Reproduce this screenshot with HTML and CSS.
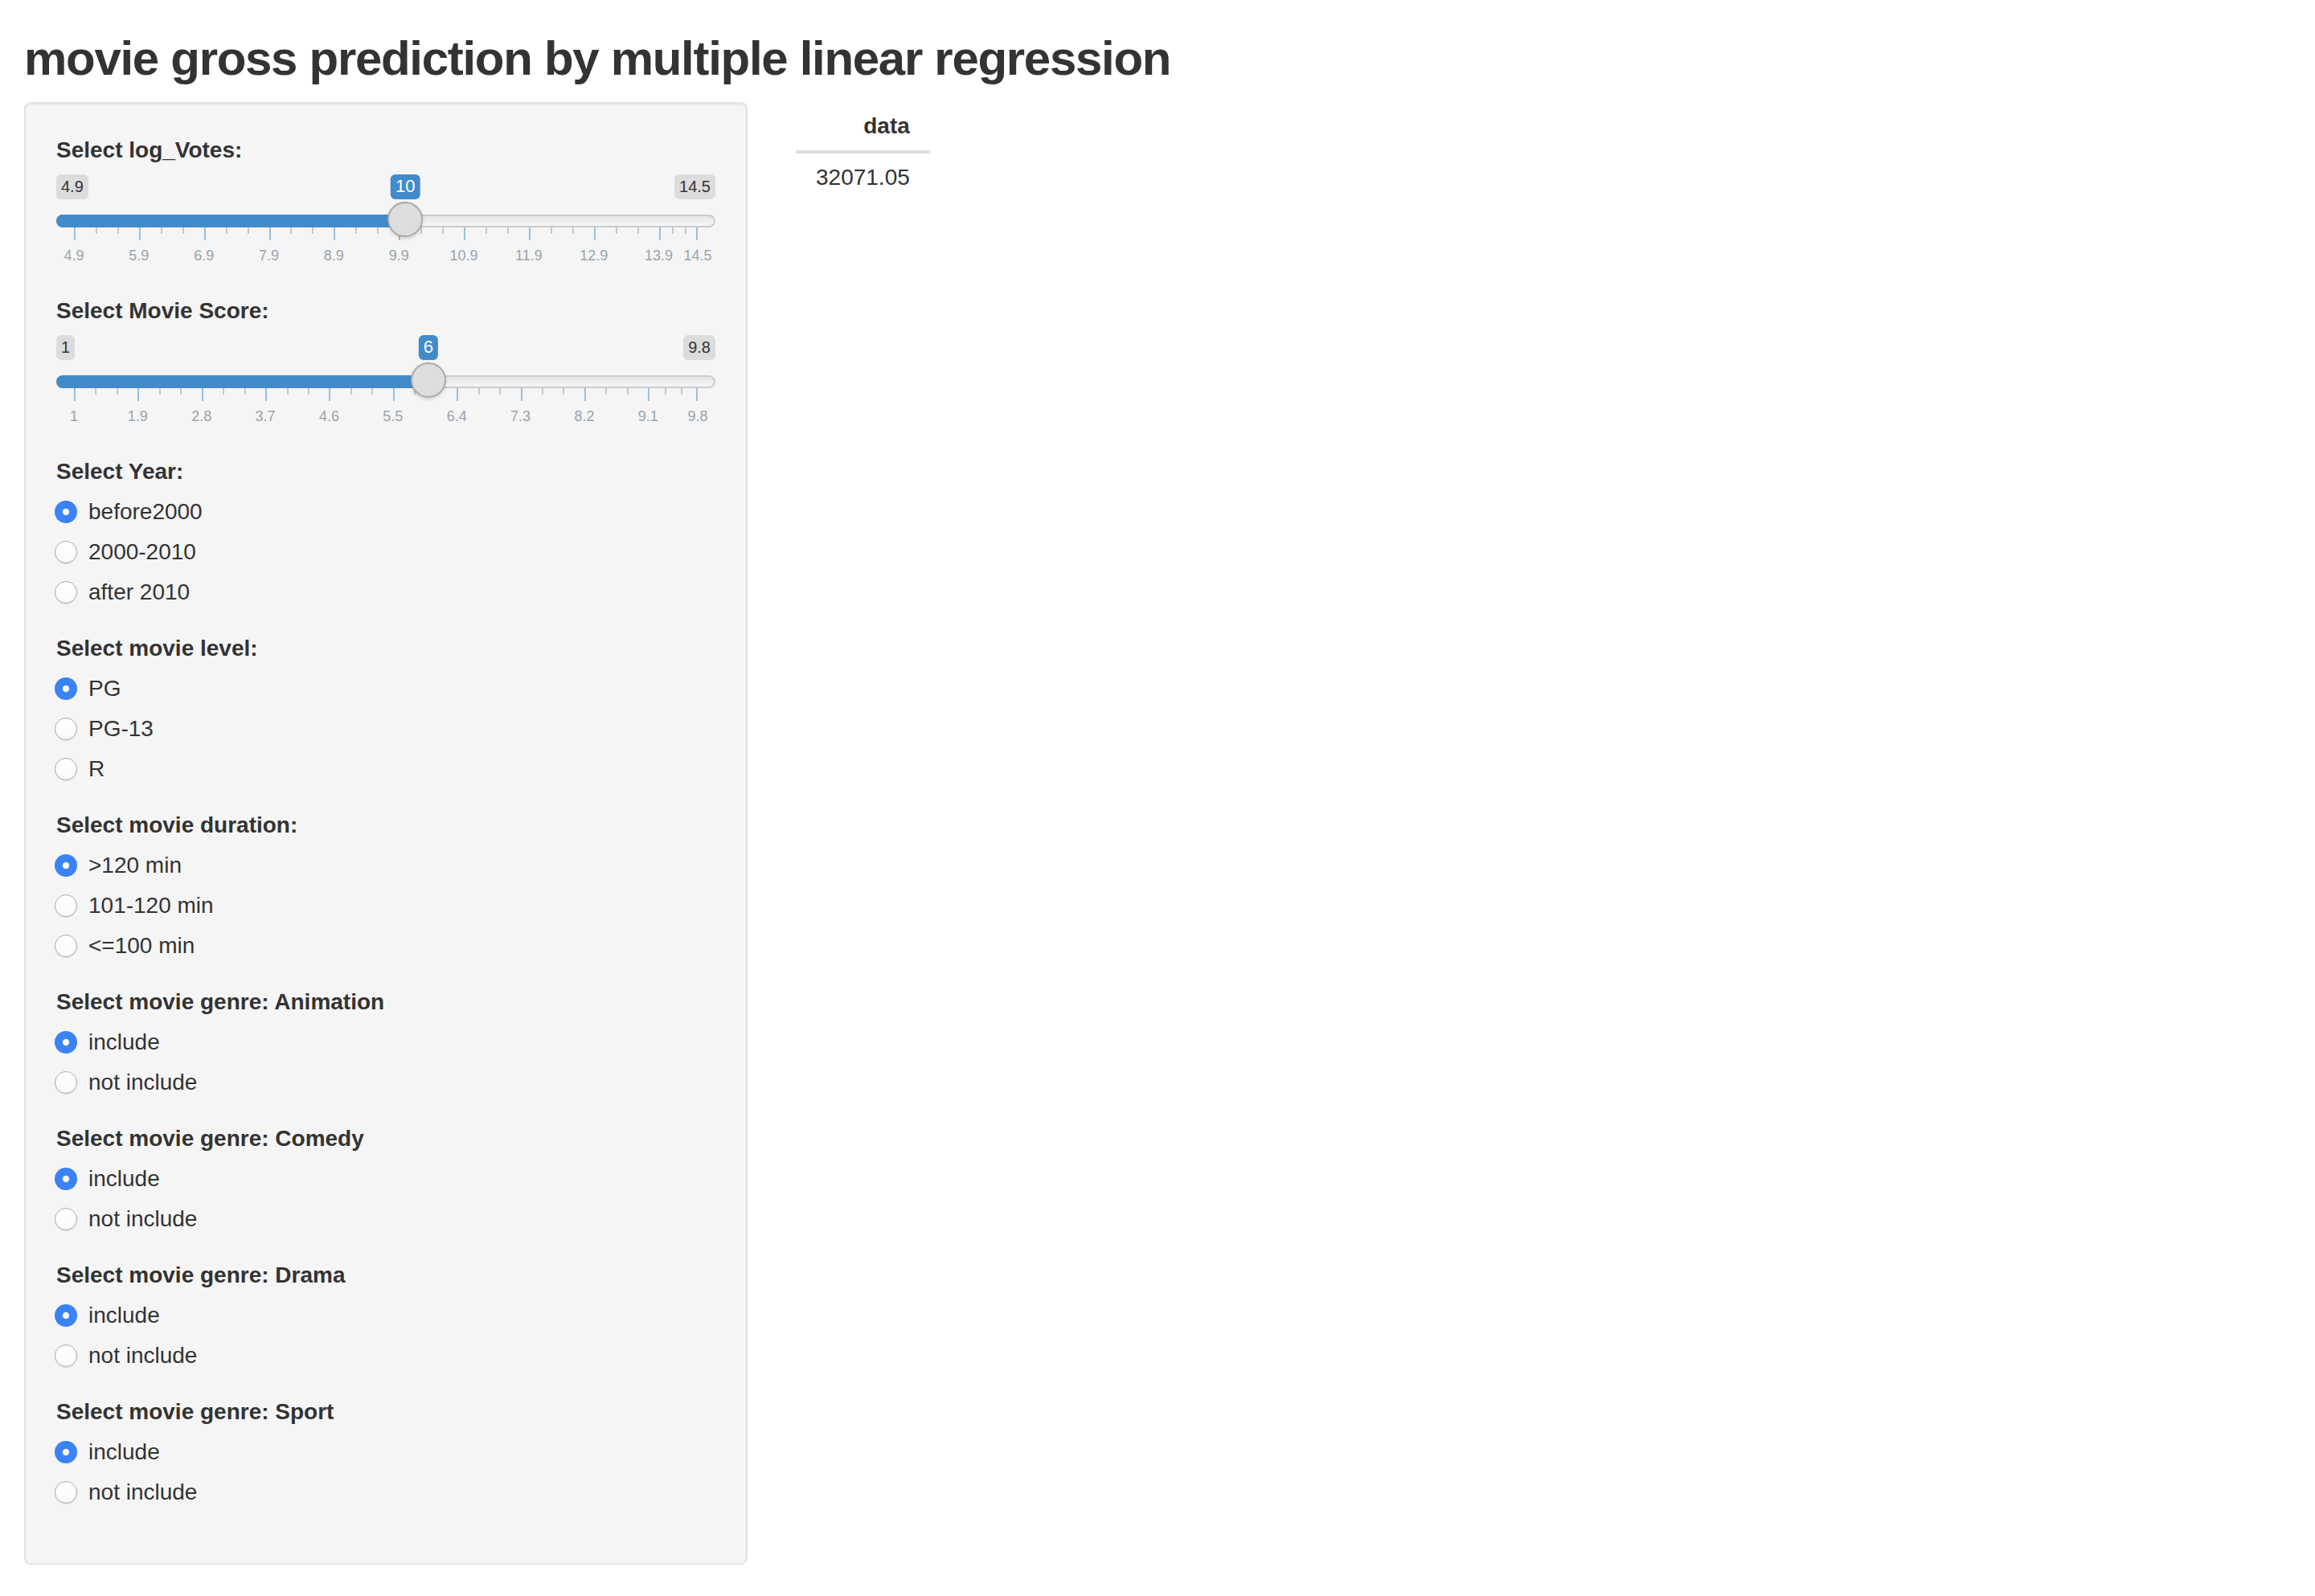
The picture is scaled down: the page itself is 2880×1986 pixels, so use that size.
FILE: index.html
```
<!DOCTYPE html>
<html>
<head>
<meta charset="utf-8">
<title>movie gross prediction by multiple linear regression</title>
<link rel="stylesheet" href="styles.css">
</head>
<body>
<div class="container">
  <h2 class="title">movie gross prediction by multiple linear regression</h2>
  <div class="row">
    <div class="sidebar">
      <form class="well">
        <div class="group">
          <label class="control-label">Select log_Votes:</label>
          <div class="irs" style="--p:0.53125">
            <span class="irs-line"></span>
            <span class="irs-bar"></span>
            <span class="irs-min">4.9</span>
            <span class="irs-max">14.5</span>
            <span class="irs-single">10</span>
            <span class="irs-grid">
              <span class="pol" style="left:0%"></span>
              <span class="pol small" style="left:3.4722%"></span>
              <span class="pol small" style="left:6.9444%"></span>
              <span class="pol" style="left:10.4167%"></span>
              <span class="pol small" style="left:13.8889%"></span>
              <span class="pol small" style="left:17.3611%"></span>
              <span class="pol" style="left:20.8333%"></span>
              <span class="pol small" style="left:24.3056%"></span>
              <span class="pol small" style="left:27.7778%"></span>
              <span class="pol" style="left:31.25%"></span>
              <span class="pol small" style="left:34.7222%"></span>
              <span class="pol small" style="left:38.1944%"></span>
              <span class="pol" style="left:41.6667%"></span>
              <span class="pol small" style="left:45.1389%"></span>
              <span class="pol small" style="left:48.6111%"></span>
              <span class="pol" style="left:52.0833%"></span>
              <span class="pol small" style="left:55.5556%"></span>
              <span class="pol small" style="left:59.0278%"></span>
              <span class="pol" style="left:62.5%"></span>
              <span class="pol small" style="left:65.9722%"></span>
              <span class="pol small" style="left:69.4444%"></span>
              <span class="pol" style="left:72.9167%"></span>
              <span class="pol small" style="left:76.3889%"></span>
              <span class="pol small" style="left:79.8611%"></span>
              <span class="pol" style="left:83.3333%"></span>
              <span class="pol small" style="left:86.8056%"></span>
              <span class="pol small" style="left:90.2778%"></span>
              <span class="pol" style="left:93.75%"></span>
              <span class="pol small" style="left:95.8333%"></span>
              <span class="pol small" style="left:97.9167%"></span>
              <span class="pol" style="left:calc(100% - 2px)"></span>
              <span class="gtext" style="left:0%">4.9</span>
              <span class="gtext" style="left:10.4167%">5.9</span>
              <span class="gtext" style="left:20.8333%">6.9</span>
              <span class="gtext" style="left:31.25%">7.9</span>
              <span class="gtext" style="left:41.6667%">8.9</span>
              <span class="gtext" style="left:52.0833%">9.9</span>
              <span class="gtext" style="left:62.5%">10.9</span>
              <span class="gtext" style="left:72.9167%">11.9</span>
              <span class="gtext" style="left:83.3333%">12.9</span>
              <span class="gtext" style="left:93.75%">13.9</span>
              <span class="gtext" style="left:100%">14.5</span>
            </span>
            <span class="irs-slider"></span>
          </div>
        </div>

        <div class="group">
          <label class="control-label">Select Movie Score:</label>
          <div class="irs" style="--p:0.568182">
            <span class="irs-line"></span>
            <span class="irs-bar"></span>
            <span class="irs-min">1</span>
            <span class="irs-max">9.8</span>
            <span class="irs-single">6</span>
            <span class="irs-grid">
              <span class="pol" style="left:0%"></span>
              <span class="pol small" style="left:3.4091%"></span>
              <span class="pol small" style="left:6.8182%"></span>
              <span class="pol" style="left:10.2273%"></span>
              <span class="pol small" style="left:13.6364%"></span>
              <span class="pol small" style="left:17.0455%"></span>
              <span class="pol" style="left:20.4545%"></span>
              <span class="pol small" style="left:23.8636%"></span>
              <span class="pol small" style="left:27.2727%"></span>
              <span class="pol" style="left:30.6818%"></span>
              <span class="pol small" style="left:34.0909%"></span>
              <span class="pol small" style="left:37.5%"></span>
              <span class="pol" style="left:40.9091%"></span>
              <span class="pol small" style="left:44.3182%"></span>
              <span class="pol small" style="left:47.7273%"></span>
              <span class="pol" style="left:51.1364%"></span>
              <span class="pol small" style="left:54.5455%"></span>
              <span class="pol small" style="left:57.9545%"></span>
              <span class="pol" style="left:61.3636%"></span>
              <span class="pol small" style="left:64.7727%"></span>
              <span class="pol small" style="left:68.1818%"></span>
              <span class="pol" style="left:71.5909%"></span>
              <span class="pol small" style="left:75%"></span>
              <span class="pol small" style="left:78.4091%"></span>
              <span class="pol" style="left:81.8182%"></span>
              <span class="pol small" style="left:85.2273%"></span>
              <span class="pol small" style="left:88.6364%"></span>
              <span class="pol" style="left:92.0455%"></span>
              <span class="pol small" style="left:94.697%"></span>
              <span class="pol small" style="left:97.3485%"></span>
              <span class="pol" style="left:calc(100% - 2px)"></span>
              <span class="gtext" style="left:0%">1</span>
              <span class="gtext" style="left:10.2273%">1.9</span>
              <span class="gtext" style="left:20.4545%">2.8</span>
              <span class="gtext" style="left:30.6818%">3.7</span>
              <span class="gtext" style="left:40.9091%">4.6</span>
              <span class="gtext" style="left:51.1364%">5.5</span>
              <span class="gtext" style="left:61.3636%">6.4</span>
              <span class="gtext" style="left:71.5909%">7.3</span>
              <span class="gtext" style="left:81.8182%">8.2</span>
              <span class="gtext" style="left:92.0455%">9.1</span>
              <span class="gtext" style="left:100%">9.8</span>
            </span>
            <span class="irs-slider"></span>
          </div>
        </div>

        <div class="group">
          <label class="control-label">Select Year:</label>
          <div class="options">
            <label class="radio"><input type="radio" name="year" checked><span>before2000</span></label>
            <label class="radio"><input type="radio" name="year"><span>2000-2010</span></label>
            <label class="radio"><input type="radio" name="year"><span>after 2010</span></label>
          </div>
        </div>

        <div class="group">
          <label class="control-label">Select movie level:</label>
          <div class="options">
            <label class="radio"><input type="radio" name="level" checked><span>PG</span></label>
            <label class="radio"><input type="radio" name="level"><span>PG-13</span></label>
            <label class="radio"><input type="radio" name="level"><span>R</span></label>
          </div>
        </div>

        <div class="group">
          <label class="control-label">Select movie duration:</label>
          <div class="options">
            <label class="radio"><input type="radio" name="dur" checked><span>&gt;120 min</span></label>
            <label class="radio"><input type="radio" name="dur"><span>101-120 min</span></label>
            <label class="radio"><input type="radio" name="dur"><span>&lt;=100 min</span></label>
          </div>
        </div>

        <div class="group">
          <label class="control-label">Select movie genre: Animation</label>
          <div class="options">
            <label class="radio"><input type="radio" name="anim" checked><span>include</span></label>
            <label class="radio"><input type="radio" name="anim"><span>not include</span></label>
          </div>
        </div>

        <div class="group">
          <label class="control-label">Select movie genre: Comedy</label>
          <div class="options">
            <label class="radio"><input type="radio" name="comedy" checked><span>include</span></label>
            <label class="radio"><input type="radio" name="comedy"><span>not include</span></label>
          </div>
        </div>

        <div class="group">
          <label class="control-label">Select movie genre: Drama</label>
          <div class="options">
            <label class="radio"><input type="radio" name="drama" checked><span>include</span></label>
            <label class="radio"><input type="radio" name="drama"><span>not include</span></label>
          </div>
        </div>

        <div class="group">
          <label class="control-label">Select movie genre: Sport</label>
          <div class="options">
            <label class="radio"><input type="radio" name="sport" checked><span>include</span></label>
            <label class="radio"><input type="radio" name="sport"><span>not include</span></label>
          </div>
        </div>
      </form>
    </div>
    <div class="main">
      <table class="shiny-table">
        <thead><tr><th>data</th></tr></thead>
        <tbody><tr><td>32071.05</td></tr></tbody>
      </table>
    </div>
  </div>
</div>
</body>
</html>
```

FILE: styles.css
```
html, body {
  margin: 0;
  padding: 0;
  background: #fff;
}
body {
  font-family: "Liberation Sans", Arial, Helvetica, sans-serif;
  font-size: 28px;
  line-height: 40px;
  color: #333;
}
.container {
  padding: 0 30px;
}
.title {
  font-size: 60px;
  line-height: 66px;
  font-weight: bold;
  margin: 40px 0 21px;
  letter-spacing: -1.3px;
}
.row {
  display: flex;
  align-items: flex-start;
}
.sidebar {
  flex: none;
  width: 900px;
}
.main {
  margin-left: 60px;
}
.well {
  display: block;
  margin: 0 0 40px;
  padding: 38px;
  background: #f5f5f5;
  border: 2px solid #e3e3e3;
  border-radius: 8px;
  box-shadow: inset 0 2px 2px rgba(0, 0, 0, 0.05);
}
.group {
  margin-bottom: 30px;
}
.control-label {
  display: block;
  font-weight: bold;
  margin-bottom: 10px;
  line-height: 40px;
}

/* slider */
.irs {
  position: relative;
  height: 120px;
  font-family: "Liberation Sans", Arial, sans-serif;
}
.irs-line {
  position: absolute;
  left: 0;
  right: 0;
  top: 50px;
  height: 16px;
  box-sizing: border-box;
  border: 2px solid #ccc;
  border-radius: 32px;
  background: linear-gradient(to bottom, #ddd -50%, #fff 150%);
}
.irs-bar {
  position: absolute;
  left: 0;
  top: 50px;
  height: 16px;
  width: calc(22px + var(--p) * (100% - 44px));
  background: #428bca;
  border-radius: 16px 0 0 16px;
}
.irs-slider {
  position: absolute;
  top: 34px;
  left: calc(var(--p) * (100% - 44px));
  width: 44px;
  height: 44px;
  box-sizing: border-box;
  border: 2px solid #aaa;
  background: #ddd;
  border-radius: 50%;
  box-shadow: 0 2px 4px rgba(0, 0, 0, 0.15);
  z-index: 2;
}
.irs-min, .irs-max, .irs-single {
  position: absolute;
  top: 0;
  padding: 2px 6px;
  border-radius: 6px;
  line-height: 26.6px;
  white-space: nowrap;
}
.irs-min, .irs-max {
  font-size: 20px;
  color: #333;
  background: rgba(0, 0, 0, 0.1);
}
.irs-min { left: 0; }
.irs-max { right: 0; }
.irs-single {
  font-size: 22px;
  color: #fff;
  background: #428bca;
  left: calc(22px + var(--p) * (100% - 44px));
  transform: translateX(-50%);
  z-index: 3;
}
.irs-grid {
  position: absolute;
  left: 22px;
  right: 22px;
  bottom: 0;
  height: 54px;
}
.pol {
  position: absolute;
  top: 0;
  width: 2px;
  height: 16px;
  background: #428bca;
  opacity: 0.5;
}
.pol.small {
  height: 8px;
  background: #999;
}
.gtext {
  position: absolute;
  bottom: 10px;
  font-size: 18px;
  line-height: 18px;
  color: #99a4ac;
  white-space: nowrap;
  transform: translateX(-50%);
}

/* radios */
.options {
  display: flex;
  flex-direction: column;
  gap: 10px;
}
.radio {
  position: relative;
  display: block;
  height: 40px;
  line-height: 40px;
  padding-left: 40px;
  font-weight: normal;
}
.radio input {
  -webkit-appearance: none;
  appearance: none;
  position: absolute;
  left: -2px;
  top: 6px;
  margin: 0;
  width: 28px;
  height: 28px;
  box-sizing: border-box;
  border-radius: 50%;
  border: 1px solid #aaa;
  background: linear-gradient(#fff, #fafafa);
  box-shadow: 0 1px 1px rgba(0, 0, 0, 0.1);
}
.radio input:checked {
  border: none;
  background: radial-gradient(circle, #fff 0 3.6px, #3a82f6 4.6px);
  box-shadow: none;
}

/* table */
.shiny-table {
  border-collapse: collapse;
  border-spacing: 0;
  margin-bottom: 40px;
}
.shiny-table th, .shiny-table td {
  padding: 10px 25px;
  text-align: right;
  line-height: 40px;
}
.shiny-table th {
  font-weight: bold;
  border-bottom: 4px solid #ddd;
}
```
